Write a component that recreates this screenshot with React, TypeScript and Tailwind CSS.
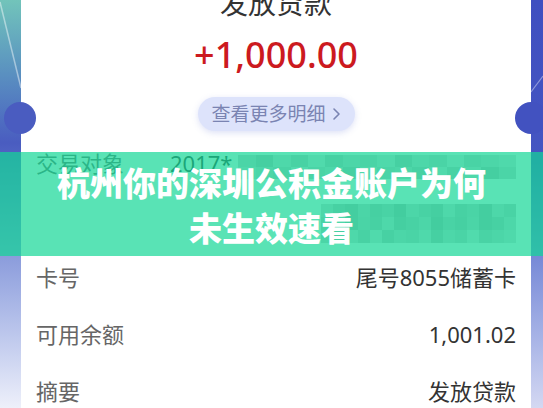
const mosaicTop = [
  "bg-[#cfcfcf]", "bg-[#bdbdbd]", "bg-[#d9d9d9]", "bg-[#c6c6c6]", "bg-[#e2e2e2]", "bg-[#c2c2c2]",
  "bg-[#d4d4d4]", "bg-[#cbcbcb]", "bg-[#dedede]", "bg-[#c0c0c0]", "bg-[#d6d6d6]", "bg-[#cccccc]",
  "bg-[#e4e4e4]", "bg-[#c8c8c8]", "bg-[#d2d2d2]", "bg-[#dcdcdc]",
];
const mosaicBottom = [
  "bg-[#d8d8d8]", "bg-[#c4c4c4]", "bg-[#b8b8b8]", "bg-[#d0d0d0]", "bg-[#c0c0c0]", "bg-[#cacaca]",
  "bg-[#b4b4b4]", "bg-[#d4d4d4]", "bg-[#c6c6c6]", "bg-[#bcbcbc]", "bg-[#dadada]", "bg-[#c2c2c2]",
  "bg-[#cecece]", "bg-[#b9b9b9]", "bg-[#d6d6d6]", "bg-[#c8c8c8]",
];

function Mosaic({ cells, h }: { cells: string[]; h: string }) {
  return (
    <div className={`flex ${h}`}>
      {cells.map((c, i) => (
        <div key={i} className={`h-full flex-1 ${c}`} />
      ))}
    </div>
  );
}

function Row({ label, value }: { label: string; value: string }) {
  return (
    <div className="flex h-[57px] items-center justify-between text-[22px] leading-none">
      <span className="text-[#666666]">{label}</span>
      <span className="text-[#333333]">{value}</span>
    </div>
  );
}

export default function App() {
  return (
    <div className="relative flex h-[408px] w-[543px] overflow-hidden bg-white font-['Noto_Sans','Noto_Sans_CJK_SC',sans-serif]">
      {/* left strip */}
      <div className="relative w-[21px] shrink-0 bg-linear-to-b from-[#72c4ba] from-0% via-[#4a5cc0] via-35% to-[#eef0fa] to-100%">
        <svg className="absolute left-0 top-0" width="21" height="100" viewBox="0 0 21 100">
          <line x1="0" y1="2" x2="21" y2="88" stroke="white" strokeOpacity="0.45" strokeWidth="1.5" />
        </svg>
      </div>

      {/* card */}
      <div className="flex min-w-0 flex-1 flex-col px-[15px]">
        <div className="-mt-[11px] h-[28px] text-center text-[28px] leading-[28px] text-[#333333]">
          发放贷款
        </div>
        <div className="mt-[20px] h-[36px] text-center text-[36px] font-medium leading-[36px] text-[#cc1a1f]">
          +1,000.00
        </div>
        <div className="mt-[24px] flex justify-center">
          <div className="flex h-[34px] w-[157px] items-center justify-center gap-[6px] rounded-full bg-[#dde3fb] text-[19px] leading-none text-[#7a84b2] shadow-[0_2px_6px_rgba(120,135,220,0.25)]">
            <span>查看更多明细</span>
            <svg width="9" height="14" viewBox="0 0 9 14" fill="none">
              <path d="M2 2l5 5-5 5" stroke="#7a84b2" strokeWidth="1.6" strokeLinecap="round" strokeLinejoin="round" />
            </svg>
          </div>
        </div>

        <div className="mt-[3px] flex flex-col">
          <div className="flex h-[57px] items-center text-[22px] leading-none">
            <span className="w-[134px] shrink-0 text-[#666666]">交易对象</span>
            <span className="text-[#333333]">2017*</span>
            <div className="ml-[6px] flex flex-1 flex-col self-start pt-[21px]">
              <Mosaic cells={mosaicTop} h="h-[12px]" />
              <Mosaic cells={mosaicTop.slice().reverse()} h="h-[12px]" />
            </div>
          </div>
          <div className="flex h-[57px] items-center justify-end">
            <div className="flex w-[195px] flex-col pt-[8px]">
              <Mosaic cells={mosaicBottom} h="h-[13px]" />
              <Mosaic cells={mosaicBottom.slice().reverse()} h="h-[13px]" />
              <Mosaic cells={mosaicTop} h="h-[13px]" />
            </div>
          </div>
          <Row label="卡号" value="尾号8055储蓄卡" />
          <Row label="可用余额" value="1,001.02" />
          <Row label="摘要" value="发放贷款" />
        </div>
      </div>

      {/* right strip */}
      <div className="relative w-[12px] shrink-0 bg-linear-to-b from-[#3f4fc0] from-0% via-[#4556c2] via-40% to-[#d4d8f2] to-100%">
        <svg className="absolute left-0 top-0" width="12" height="120" viewBox="0 0 12 120">
          <line x1="0" y1="92" x2="12" y2="76" stroke="white" strokeOpacity="0.4" strokeWidth="1.2" />
        </svg>
      </div>

      {/* ticket notches */}
      <div className="absolute left-[4px] top-[102px] h-[32px] w-[32px] rounded-full bg-[#4a5cc0]" />
      <div className="absolute left-[515px] top-[102px] h-[32px] w-[32px] rounded-full bg-[#4252c0]" />

      {/* headline overlay */}
      <div className="absolute left-0 right-0 top-[152px] flex h-[104px] flex-col items-center bg-[rgba(19,215,149,0.7)] pt-[8px] font-['Noto_Sans_CJK_SC',sans-serif] text-[33px] font-black leading-[45px] text-white">
        <div>杭州你的深圳公积金账户为何</div>
        <div>未生效速看</div>
      </div>
    </div>
  );
}
